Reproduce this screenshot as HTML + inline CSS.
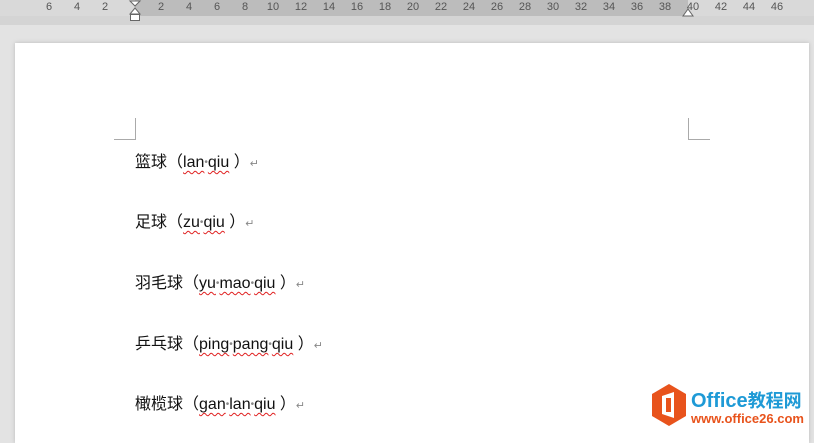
<!DOCTYPE html>
<html><head><meta charset="utf-8"><style>
body{margin:0;width:814px;height:435px;background:#e3e3e3;position:relative;overflow:hidden;font-family:"Liberation Sans","Noto Sans CJK SC",sans-serif}
.r1{position:absolute;left:0;top:0;width:814px;height:25px;background:#d4d4d4}
.r0{position:absolute;left:0;top:0;width:814px;height:16px;background:#d9d9d9}
.rd{position:absolute;left:135px;top:0;width:553px;height:16px;background:#bcbcbc}
.n{position:absolute;top:1px;font-size:11px;color:#555;transform:translateX(-50%)}
.page{position:absolute;left:15px;top:43px;width:794px;height:400px;background:#fff;box-shadow:0 0 4px #bbb}
.ln{position:absolute;left:135px;font-size:16px;color:#111;white-space:nowrap}
.w{text-decoration:underline wavy #e02020;text-decoration-thickness:1px;text-underline-offset:3px}
.d{color:#888;font-size:10px;vertical-align:2px}
.p{color:#888;font-size:11px}
.c{position:absolute;border-color:#aaa;border-style:solid;width:21px;height:21px}
</style></head><body>
<div class="r1"></div><div class="r0"></div><div class="rd"></div>
<div style="position:absolute;left:0;top:0">
<span class="n" style="left:49px">6</span><span class="n" style="left:77px">4</span><span class="n" style="left:105px">2</span>
<span class="n" style="left:161px">2</span><span class="n" style="left:189px">4</span><span class="n" style="left:217px">6</span><span class="n" style="left:245px">8</span><span class="n" style="left:273px">10</span><span class="n" style="left:301px">12</span><span class="n" style="left:329px">14</span><span class="n" style="left:357px">16</span><span class="n" style="left:385px">18</span><span class="n" style="left:413px">20</span><span class="n" style="left:441px">22</span><span class="n" style="left:469px">24</span><span class="n" style="left:497px">26</span><span class="n" style="left:525px">28</span><span class="n" style="left:553px">30</span><span class="n" style="left:581px">32</span><span class="n" style="left:609px">34</span><span class="n" style="left:637px">36</span><span class="n" style="left:665px">38</span><span class="n" style="left:693px">40</span><span class="n" style="left:721px">42</span><span class="n" style="left:749px">44</span><span class="n" style="left:777px">46</span>
</div>
<svg style="position:absolute;left:128px;top:0" width="14" height="22"><path d="M2 1H12L7 6Z M7 8L2 14H12Z" fill="#fff" stroke="#666"/><rect x="2.5" y="14.5" width="9" height="6" fill="#fff" stroke="#666"/></svg>
<svg style="position:absolute;left:682px;top:8px" width="12" height="9"><path d="M6 1L1 8H11Z" fill="#fff" stroke="#666"/></svg>
<div class="page"></div>
<div class="c" style="left:114px;top:118px;border-width:0 1px 1px 0"></div>
<div class="c" style="left:688px;top:118px;border-width:0 0 1px 1px"></div>
<div class="ln" style="top:148px">篮球（<span class="w">lan</span><span class="d">•</span><span class="w">qiu</span> ）<span class="p">↵</span></div>
<div class="ln" style="top:208px">足球（<span class="w">zu</span><span class="d">•</span><span class="w">qiu</span> ）<span class="p">↵</span></div>
<div class="ln" style="top:269px">羽毛球（<span class="w">yu</span><span class="d">•</span><span class="w">mao</span><span class="d">•</span><span class="w">qiu</span> ）<span class="p">↵</span></div>
<div class="ln" style="top:330px">乒乓球（<span class="w">ping</span><span class="d">•</span><span class="w">pang</span><span class="d">•</span><span class="w">qiu</span> ）<span class="p">↵</span></div>
<div class="ln" style="top:390px">橄榄球（<span class="w">gan</span><span class="d">•</span><span class="w">lan</span><span class="d">•</span><span class="w">qiu</span> ）<span class="p">↵</span></div>
<svg style="position:absolute;left:650px;top:383px" width="38" height="44"><path d="M19 1L36 11V33L19 43L2 33V11Z" fill="#e8531c"/><path d="M12 13L24 9V35L12 31Z" fill="#fff"/><rect x="16" y="15" width="5" height="14" fill="#e8531c"/></svg>
<div style="position:absolute;left:691px;top:387px;font-size:20px;font-weight:bold;color:#1e9ad6">Office<span style="font-size:18px">教程网</span></div>
<div style="position:absolute;left:691px;top:411px;font-size:13px;font-weight:bold;color:#e8531c">www.office26.com</div>
</body></html>
